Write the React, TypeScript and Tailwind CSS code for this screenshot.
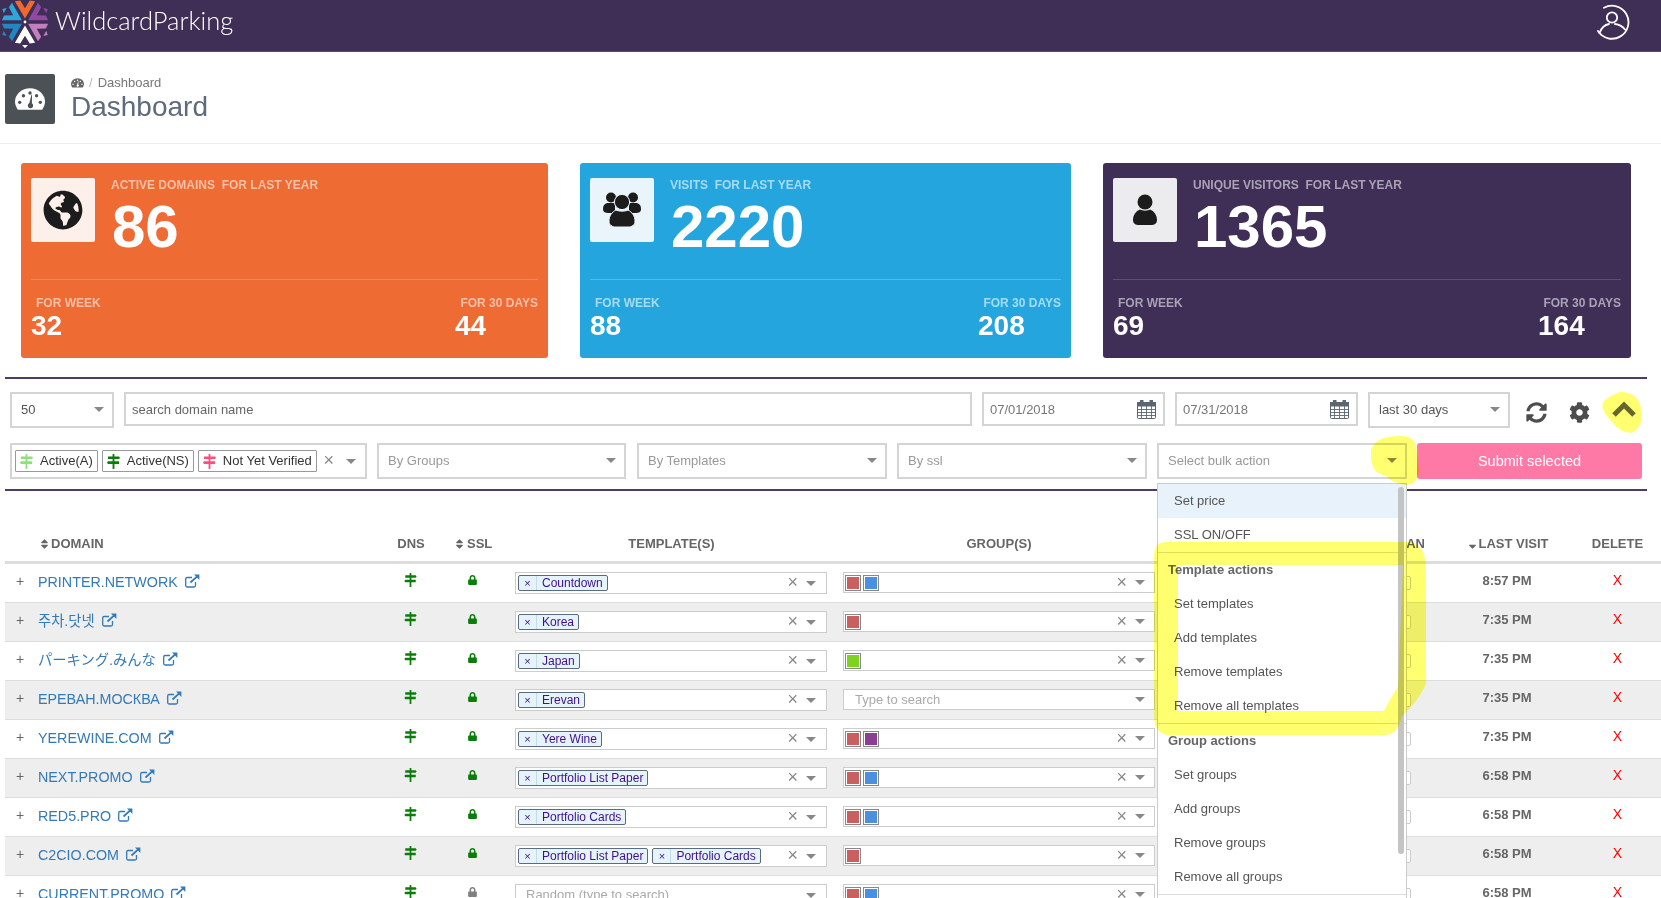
import React from "react";
import { FaGlobeAmericas, FaSyncAlt, FaCog, FaLock, FaSort, FaSortDown } from "react-icons/fa";

function Logo() {
  const segs = [
    ["#ef6a2e", 0], ["#8e4a9e", 60], ["#c27fbd", 120], ["#ffffff", 180], ["#1f87c2", 240], ["#2fa5d9", 300],
  ] as const;
  return (
    <svg width="50" height="50" viewBox="3 3.5 42 42" className="shrink-0">
      {segs.map(([c, a]) => (
        <g key={a} transform={`rotate(${a} 24 22)`}>
          <polygon points="24,19 15.5,4.5 20,4 24,10.5 28,4 32.5,4.5" fill={c} />
          <polygon points="24,0 21.5,2.8 26.5,2.8" fill={c} />
        </g>
      ))}
      <circle cx="24" cy="22" r="1.2" fill="#fff" />
    </svg>
  );
}

function UserCircle() {
  return (
    <svg width="36" height="36" viewBox="0 0 36 36" fill="none" stroke="#fff" strokeWidth="1.8" strokeLinecap="round">
      <path d="M4 27 A16.5 16.5 0 1 0 10 3.8" />
      <circle cx="18" cy="13.5" r="5.2" />
      <path d="M5.5 29 C8 22.5 12 20.5 15 20 M31 25.5 C28.5 22 25 20.5 21 20" />
    </svg>
  );
}

function Gauge({ className, bg }: { className: string; bg: string }) {
  return (
    <svg viewBox="0 0 32 24" className={className}>
      <path d="M3 23 C1 20 0 17 0 14.5 A16 14.5 0 0 1 32 14.5 C32 17 31 20 29 23 Z" fill="currentColor" />
      {[[5, 15], [9, 8], [16, 5], [23, 8], [27, 15]].map(([x, y]) => (
        <circle key={x} cx={x} cy={y} r="1.8" fill={bg} />
      ))}
      <path d="M15 17 L17.5 7 L18.2 7 L18 17 Z" fill={bg} />
      <circle cx="16.5" cy="18.5" r="2.8" fill={bg} />
    </svg>
  );
}

function Sign({ color, className }: { color: string; className: string }) {
  return (
    <svg viewBox="0 0 14 16" className={className} fill={color}>
      <rect x="6" y="0" width="2" height="16" />
      <path d="M1 2.5 H13 L14 3.9 L13 5.4 H1 Z" />
      <path d="M0 9 L1 7.6 H13 V10.6 H1 Z" />
    </svg>
  );
}

function OnePerson() {
  return (
    <svg width="24" height="32" viewBox="0 0 24 32" fill="#1c1c1c">
      <circle cx="12" cy="8" r="7.5" />
      <path d="M7 15.5 C9 17 15 17 17 15.5 C21 17 24 21 24 26 C24 30 21 31 18 31 H6 C3 31 0 30 0 26 C0 21 3 17 7 15.5 Z" />
    </svg>
  );
}

function ThreePeople() {
  return (
    <svg width="38" height="36" viewBox="0 0 38 36" fill="#1c1c1c" stroke="#e9f5fb" strokeWidth="0">
      <circle cx="8" cy="5.5" r="5" />
      <circle cx="30" cy="5.5" r="5" />
      <path d="M4 11 H12 L12 21 H6 C2 21 0 20 0 17 C0 14 1 12 4 11 Z" />
      <path d="M26 11 H34 C37 12 38 14 38 17 C38 20 36 21 32 21 H26 Z" />
      <circle cx="19" cy="10" r="7.6" stroke="#e9f5fb" strokeWidth="1" />
      <path d="M13 18 C15 19.5 23 19.5 25 18 C29 20 32 24 32 29 C32 33 29 35 25 35 H13 C9 35 6 33 6 29 C6 24 9 20 13 18 Z" stroke="#e9f5fb" strokeWidth="1" />
    </svg>
  );
}

function ExtLink() {
  return (
    <svg width="15" height="14" viewBox="0 0 15 14" fill="none" stroke="#337ab7" strokeWidth="1.3" className="shrink-0">
      <path d="M10.5 8 V11.5 A1.5 1.5 0 0 1 9 13 H2.2 A1.5 1.5 0 0 1 0.7 11.5 V5 A1.5 1.5 0 0 1 2.2 3.5 H7" />
      <path d="M5.5 8.5 L13 1.6" strokeWidth="1.8" />
      <path d="M9 0.6 H14.4 V6 Z" fill="#337ab7" stroke="none" />
    </svg>
  );
}

function Calendar() {
  return (
    <svg width="19" height="19" viewBox="0 0 19 19" className="shrink-0" fill="none" stroke="#5b6670">
      <rect x="0.5" y="2.5" width="18" height="16" rx="1" fill="#fff" />
      <rect x="0.5" y="2.5" width="18" height="3.5" fill="#5b6670" />
      <rect x="3.5" y="0.5" width="2.5" height="4" fill="#5b6670" />
      <rect x="13" y="0.5" width="2.5" height="4" fill="#5b6670" />
      <path d="M0.5 9.5H18.5M0.5 12.5H18.5M0.5 15.5H18.5M4.5 6V18.5M9.5 6V18.5M14.5 6V18.5" strokeWidth="0.9" />
    </svg>
  );
}

function Arrow({ className = "" }: { className?: string }) {
  return <span className={`inline-block w-0 h-0 border-x-[5px] border-x-transparent border-t-[5px] border-t-[#888] ${className}`} />;
}

function Clear() {
  return <span className="text-[#888] text-[18px] leading-none">×</span>;
}

function StatCard({ color, width, icon, title, value, week, month, iconBg, divider, label }: {
  color: string; width: string; icon: React.ReactNode; title: string; value: string; week: string; month: string; iconBg: string; divider: string; label: string;
}) {
  return (
    <div className={`${color} ${width} h-[195px] rounded-[3px] px-[10px] pt-[15px] text-white`}>
      <div className="flex h-[101px]">
        <div className={`${iconBg} w-[64px] h-[64px] rounded-[2px] flex items-center justify-center text-[#1c1c1c]`}>{icon}</div>
        <div className="ml-[16px]">
          <div className={`text-[12px] font-bold leading-[14px] whitespace-pre ${label}`}>{title}</div>
          <div className="text-[60px] font-bold leading-[56px] mt-[7px] ml-[1px]">{value}</div>
        </div>
      </div>
      <div className={`h-[1px] ${divider}`} />
      <div className="flex justify-between mt-[16px]">
        <div>
          <div className={`text-[12px] font-bold leading-[14px] pl-[5px] ${label}`}>FOR WEEK</div>
          <div className="text-[28px] font-bold leading-[32px]">{week}</div>
        </div>
        <div className="text-right w-[100px]">
          <div className={`text-[12px] font-bold leading-[14px] ${label}`}>FOR 30 DAYS</div>
          <div className="text-[28px] font-bold leading-[32px] text-left ml-auto w-[83px]">{month}</div>
        </div>
      </div>
    </div>
  );
}

function PlainSelect({ width, text, muted = true }: { width: string; text: string; muted?: boolean }) {
  return (
    <div className={`${width} h-[36px] border-2 border-[#d4d4d4] flex items-center justify-between pl-[9px] pr-[8px] pb-[1px] text-[13px] ${muted ? "text-[#999]" : "text-[#555]"}`}>
      <span>{text}</span>
      <Arrow />
    </div>
  );
}

function StatusTag({ color, text }: { color: string; text: string }) {
  return (
    <span className="h-[22px] border border-[#999] flex items-center gap-[7px] pl-[4px] pr-[4px] text-[13px] text-[#333] rounded-[1px] whitespace-nowrap">
      <Sign color={color} className="w-[13px] h-[15px]" />
      {text}
    </span>
  );
}

function Tag({ text }: { text: string }) {
  return (
    <span className="h-[16px] flex items-center border border-[#5a6b80] rounded-[2px] bg-[#e5f4fb] text-[12px] text-[#3f0f8f] leading-none whitespace-nowrap">
      <span className="w-[18px] text-center text-[11px] border-r border-[#c5dbe8] h-full flex items-center justify-center">×</span>
      <span className="pl-[5px] pr-[4px]">{text}</span>
    </span>
  );
}

function Swatch({ color }: { color: string }) {
  return (
    <span className="w-[16px] h-[16px] border border-[#888] p-[1px] bg-white block">
      <span className={`block w-full h-full ${color}`} />
    </span>
  );
}

const RED = "bg-[#c95f5f]";
const BLUE = "bg-[#4a8fe0]";
const GREEN = "bg-[#7ed321]";
const VIOLET = "bg-[#8a3f92]";

const rows: { name: string; templates: string[]; groups: string[]; time: string; lock?: string }[] = [
  { name: "PRINTER.NETWORK", templates: ["Countdown"], groups: [RED, BLUE], time: "8:57 PM" },
  { name: "주차.닷넷", templates: ["Korea"], groups: [RED], time: "7:35 PM" },
  { name: "パーキング.みんな", templates: ["Japan"], groups: [GREEN], time: "7:35 PM" },
  { name: "ЕРЕВАН.МОСКВА", templates: ["Erevan"], groups: [], time: "7:35 PM" },
  { name: "YEREWINE.COM", templates: ["Yere Wine"], groups: [RED, VIOLET], time: "7:35 PM" },
  { name: "NEXT.PROMO", templates: ["Portfolio List Paper"], groups: [RED, BLUE], time: "6:58 PM" },
  { name: "RED5.PRO", templates: ["Portfolio Cards"], groups: [RED, BLUE], time: "6:58 PM" },
  { name: "C2CIO.COM", templates: ["Portfolio List Paper", "Portfolio Cards"], groups: [RED], time: "6:58 PM" },
  { name: "CURRENT.PROMO", templates: [], groups: [RED, BLUE], time: "6:58 PM", lock: "text-[#808080]" },
];

function Row({ r, i }: { r: (typeof rows)[number]; i: number }) {
  return (
    <div className={`flex h-[39px] border-b border-[#ddd] ${i % 2 === 1 ? "bg-[#eeeeee]" : "bg-white"}`}>
      <div className="w-[380px] flex items-center pb-[1px]">
        <span className="w-[33px] pl-[11px] text-[#666] text-[14px] leading-none pb-[4px]">+</span>
        <span className="text-[14.3px] text-[#337ab7] whitespace-nowrap">{r.name}</span>
        <span className="ml-[7px] mb-[4px]"><ExtLink /></span>
      </div>
      <div className="w-[52px] flex items-center justify-center pb-[6px] pr-[2px]">
        <Sign color="#0a7d0a" className="w-[13px] h-[14px]" />
      </div>
      <div className="w-[71px] flex items-center justify-center pb-[7px]">
        <FaLock className={`w-[9px] h-[10px] ${r.lock ?? "text-[#0a7d0a]"}`} />
      </div>
      <div className="w-[327px] pl-[7px] pt-[8px]">
        <div className="w-[312px] h-[22px] border border-[#ccc] bg-white flex items-center pl-[2px] pr-[10px] gap-[4px]">
          {r.templates.length === 0 && <span className="text-[13px] text-[#aaa] pl-[8px]">Random (type to search)</span>}
          {r.templates.map((t) => <Tag key={t} text={t} />)}
          {r.templates.length > 0 && <span className="ml-auto"><Clear /></span>}
          <Arrow className={r.templates.length === 0 ? "ml-auto" : "ml-[4px]"} />
        </div>
      </div>
      <div className="w-[328px] pl-[8px] pt-[8px]">
        <div className="w-[312px] h-[21px] border border-[#ccc] bg-white flex items-center pl-[1px] pr-[9px] gap-[2px]">
          {r.groups.length === 0 && <span className="text-[13px] text-[#aaa] pl-[10px]">Type to search</span>}
          {r.groups.map((g, k) => <Swatch key={k} color={g} />)}
          {r.groups.length > 0 && <span className="ml-auto"><Clear /></span>}
          <Arrow className={r.groups.length === 0 ? "ml-auto" : "ml-[6px]"} />
        </div>
      </div>
      <div className="w-[286px] flex justify-end items-center pr-[38px] pb-[1px]">
        <span className="w-[12px] h-[14px] border border-[#ccc] rounded-[2px] bg-white" />
      </div>
      <div className="w-[116px] flex items-center justify-center pb-[4px] text-[13px] font-bold text-[#666]">{r.time}</div>
      <div className="flex-1 pl-[9px] flex items-center justify-center pb-[5px] text-[14px] text-[#ff0000]">X</div>
    </div>
  );
}

function MenuItem({ text, active }: { text: string; active?: boolean }) {
  return <div className={`h-[34px] flex items-center pl-[16px] text-[13px] text-[#555] ${active ? "bg-[#e8f2fb] text-[#333]" : ""}`}>{text}</div>;
}
function MenuGroup({ text }: { text: string }) {
  return <div className="h-[34px] flex items-center pl-[10px] text-[13px] font-bold text-[#666]">{text}</div>;
}

export default function App() {
  return (
    <div className="relative w-[1661px] h-[898px] overflow-hidden bg-white font-['Liberation_Sans','Noto_Sans_CJK_KR','Noto_Sans_CJK_JP',sans-serif] text-[#555]">
      <header className="h-[52px] bg-[#3f2e56] border-b border-[#5a4a6e] flex items-start justify-between">
        <div className="flex items-start">
          <Logo />
          <span className="ml-[5px] mt-[5px] text-[25.5px] font-['Lato',sans-serif] font-light text-white leading-[30px]">WildcardParking</span>
        </div>
        <div className="mr-[31px] mt-[4px]"><UserCircle /></div>
      </header>

      <div className="h-[92px] border-b border-[#eee] flex pl-[5px] pt-[22px]">
        <div className="w-[50px] h-[50px] bg-[#4b5154] rounded-[2px] flex items-center justify-center text-white">
          <Gauge className="w-[30px] h-[23px]" bg="#4b5154" />
        </div>
        <div className="ml-[16px]">
          <div className="flex items-center text-[13px] leading-[18px] text-[#777]">
            <Gauge className="w-[13px] h-[10px] text-[#666]" bg="#fff" />
            <span className="mx-[5px] text-[#bbb]">/</span>
            <span>Dashboard</span>
          </div>
          <div className="text-[28px] leading-[30px] text-[#5d6b7d]">Dashboard</div>
        </div>
      </div>

      <div className="flex pl-[21px] pt-[19px]">
        <StatCard color="bg-[#ee6b33]" width="w-[527px]" iconBg="bg-[#fdf0eb]" divider="bg-[#f08a62]" label="text-[#fac0a8]"
          icon={<FaGlobeAmericas className="w-[40px] h-[40px]" />} title="ACTIVE DOMAINS  FOR LAST YEAR" value="86" week="32" month="44" />
        <div className="w-[32px]" />
        <StatCard color="bg-[#25a5de]" width="w-[491px]" iconBg="bg-[#e9f5fb]" divider="bg-[#55b9e6]" label="text-[#a5dcf5]"
          icon={<ThreePeople />} title="VISITS  FOR LAST YEAR" value="2220" week="88" month="208" />
        <div className="w-[32px]" />
        <StatCard color="bg-[#3f2e56]" width="w-[528px]" iconBg="bg-[#ecebee]" divider="bg-[#5e4f72]" label="text-[#a9a1b4]"
          icon={<OnePerson />} title="UNIQUE VISITORS  FOR LAST YEAR" value="1365" week="69" month="164" />
      </div>

      <div className="ml-[5px] w-[1642px] mt-[19px] border-y-2 border-[#4d3c66] pt-[13px] pb-[10px]">
        <div className="flex items-start pl-[5px]">
          <PlainSelect width="w-[104px]" text="50" muted={false} />
          <div className="ml-[10px] w-[848px] h-[34px] border-2 border-[#d4d4d4] flex items-center pl-[6px] pt-[1px] text-[13px] text-[#666]">search domain name</div>
          <div className="ml-[10px] w-[183px] h-[34px] border-2 border-[#d4d4d4] flex items-center justify-between pl-[6px] pr-[7px] pt-[1px] text-[13px] text-[#777]">07/01/2018<Calendar /></div>
          <div className="ml-[10px] w-[183px] h-[34px] border-2 border-[#d4d4d4] flex items-center justify-between pl-[6px] pr-[7px] pt-[1px] text-[13px] text-[#777]">07/31/2018<Calendar /></div>
          <PlainSelect width="ml-[10px] w-[142px]" text="last 30 days" muted={false} />
          <FaSyncAlt className="ml-[16px] mt-[10px] w-[21px] h-[21px] text-[#4d4d4d]" />
          <FaCog className="ml-[22px] mt-[10px] w-[21px] h-[21px] text-[#4d4d4d]" />
          <svg width="26" height="18" viewBox="0 0 26 18" fill="none" stroke="#666" strokeWidth="5" className="ml-[21px] mt-[8px]">
            <polyline points="3,15 13,5 23,15" />
          </svg>
        </div>
        <div className="flex items-start pl-[5px] mt-[15px]">
          <div className="w-[357px] h-[36px] border-2 border-[#d4d4d4] flex items-center pl-[3px] pr-[9px] gap-[4px]">
            <StatusTag color="#8fe07a" text="Active(A)" />
            <StatusTag color="#0a7d0a" text="Active(NS)" />
            <StatusTag color="#ff4d80" text="Not Yet Verified" />
            <span className="ml-auto"><Clear /></span>
            <Arrow className="ml-[8px]" />
          </div>
          <PlainSelect width="ml-[10px] w-[249px]" text="By Groups" />
          <PlainSelect width="ml-[11px] w-[250px]" text="By Templates" />
          <PlainSelect width="ml-[10px] w-[250px]" text="By ssl" />
          <div className="relative ml-[10px] w-[250px]">
            <PlainSelect width="w-[250px]" text="Select bulk action" />
            <div className="absolute z-10 left-0 top-[40px] w-[250px] h-[480px] bg-white border border-[#ccc]">
              <MenuItem text="Set price" active />
              <div className="border-b border-[#ddd]"><MenuItem text="SSL ON/OFF" /></div>
              <MenuGroup text="Template actions" />
              <MenuItem text="Set templates" />
              <MenuItem text="Add templates" />
              <MenuItem text="Remove templates" />
              <div className="border-b border-[#ddd]"><MenuItem text="Remove all templates" /></div>
              <MenuGroup text="Group actions" />
              <MenuItem text="Set groups" />
              <MenuItem text="Add groups" />
              <MenuItem text="Remove groups" />
              <div className="border-b border-[#ddd]"><MenuItem text="Remove all groups" /></div>
              <div className="absolute right-[2px] top-[3px] w-[6px] h-[367px] rounded-[3px] bg-[#c4c4c4]" />
            </div>
          </div>
          <div className="ml-[10px] w-[225px] h-[36px] rounded-[3px] bg-[#ff79a6] text-white text-[14.5px] flex items-center justify-center pt-[2px]">Submit selected</div>
        </div>
      </div>

      <div className="ml-[5px]">
        <div className="h-[73px] flex items-end pb-[9px] border-b-[3px] border-[#ddd] text-[13px] font-bold text-[#666] leading-[16px]">
          <div className="w-[380px] flex items-center pl-[35px]"><FaSort className="w-[9px] h-[12px] mr-[2px]" />DOMAIN</div>
          <div className="w-[52px] text-center">DNS</div>
          <div className="w-[71px] flex items-center pl-[18px]"><FaSort className="w-[9px] h-[12px] mr-[3px]" />SSL</div>
          <div className="w-[327px] text-center">TEMPLATE(S)</div>
          <div className="w-[328px] text-center">GROUP(S)</div>
          <div className="w-[286px] text-right pr-[24px]">PLAN</div>
          <div className="w-[116px] flex items-center justify-center pl-[3px]"><FaSortDown className="w-[9px] h-[12px] mr-[1px]" />LAST VISIT</div>
          <div className="flex-1 pl-[9px] text-center">DELETE</div>
        </div>
        {rows.map((r, i) => <Row key={r.name} r={r} i={i} />)}
      </div>

      <svg className="absolute inset-0 w-full h-full pointer-events-none z-20 mix-blend-multiply" viewBox="0 0 1661 898">
        <path fill="#ffff70" fillRule="evenodd" d="M1166 542 L1410 542 Q1426 545 1426 570 L1426 684 Q1420 697 1410 708 L1402 716 Q1398 735 1385 735 L1170 735 Q1154 735 1154 715 L1154 555 Q1155 542 1166 542 Z M1178 565 L1178 711 L1384 711 Q1392 695 1398 687 L1403 565 Z" />
        <path fill="#ffff70" d="M1400 436 Q1412 435 1416 445 L1419 470 Q1418 485 1405 485 Q1392 483 1386 476 L1378 473 Q1370 468 1371 450 Q1375 436 1400 436 Z" />
        <path fill="#ffff70" d="M1620 392 Q1638 392 1641 408 Q1645 425 1632 433 Q1620 433 1612 422 Q1600 410 1603 402 Q1610 395 1620 392 Z" />
      </svg>
    </div>
  );
}
